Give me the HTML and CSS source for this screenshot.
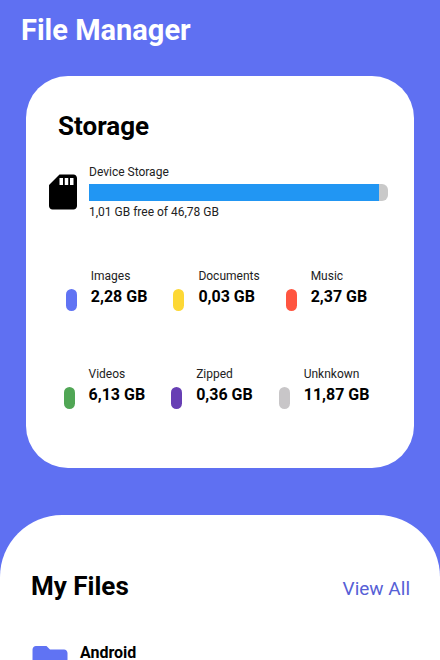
FILE: index.html
```
<!DOCTYPE html>
<html lang="en">
<head>
<meta charset="utf-8">
<meta name="viewport" content="width=device-width, initial-scale=1">
<title>File Manager</title>
<link rel="stylesheet" href="styles.css">
</head>
<body>
<div class="app">
  <header class="app-header"><h1>File Manager</h1></header>
  <main>
    <section class="storage">
      <h2>Storage</h2>
      <div class="device">
        <svg class="icon" viewBox="0 0 24 24" aria-hidden="true"><path d="M18 2h-8L4.020 8 4 20c0 1.100.9 2 2 2h12c1.100 0 2-.9 2-2V4c0-1.100-.9-2-2-2zm-6 6h-2V4h2v4zm3 0h-2V4h2v4zm3 0h-2V4h2v4z"/></svg>
        <div class="device-info">
          <p class="label">Device Storage</p>
          <div class="bar"><div class="bar-used" style="width: 97%"></div></div>
          <p class="label">1,01 GB free of 46,78 GB</p>
        </div>
      </div>
      <div class="legend">
        <ul class="legend-row">
          <li><span class="pill images"></span><div><p class="label">Images</p><p class="value">2,28 GB</p></div></li>
          <li><span class="pill documents"></span><div><p class="label">Documents</p><p class="value">0,03 GB</p></div></li>
          <li><span class="pill music"></span><div><p class="label">Music</p><p class="value">2,37 GB</p></div></li>
        </ul>
        <ul class="legend-row">
          <li><span class="pill videos"></span><div><p class="label">Videos</p><p class="value">6,13 GB</p></div></li>
          <li><span class="pill zipped"></span><div><p class="label">Zipped</p><p class="value">0,36 GB</p></div></li>
          <li><span class="pill unknown"></span><div><p class="label">Unknkown</p><p class="value">11,87 GB</p></div></li>
        </ul>
      </div>
    </section>
    <section class="files">
      <div class="files-head">
        <h2>My Files</h2>
        <a href="#">View All</a>
      </div>
      <div class="file">
        <svg class="icon folder" viewBox="0 0 24 24" aria-hidden="true"><path d="M10 4H4c-1.100 0-1.990.9-1.990 2L2 18c0 1.100.9 2 2 2h16c1.100 0 2-.9 2-2V8c0-1.100-.9-2-2-2h-8l-2-2z"/></svg>
        <p class="file-name">Android</p>
      </div>
    </section>
  </main>
</div>
</body>
</html>
```
FILE: styles.css
```
* {
  box-sizing: border-box;
  margin: 0;
  padding: 0;
}

body {
  background: #5f70f2;
  color: #000;
  font-family: Roboto, "Liberation Sans", sans-serif;
}

.app {
  display: flex;
  flex-direction: column;
  height: 100vh;
  overflow: hidden;
}

.app-header {
  padding: 12px 21px 28px;
  color: #fff;
}

h1 {
  font-size: 29px;
  line-height: 36px;
  font-weight: 700;
}

h2 {
  font-size: 26px;
  line-height: 32px;
  font-weight: 700;
}

.storage {
  margin: 0 26px;
  padding: 34px 26px 58px 16px;
  border-radius: 42px;
  background: #fff;
}

.storage h2 {
  padding-left: 16px;
}

.device {
  display: flex;
  align-items: center;
  gap: 5px;
  margin-top: 22px;
}

.icon {
  flex: none;
  width: 42px;
  height: 42px;
}

.device-info {
  flex: 1;
}

.label {
  font-size: 12px;
  line-height: 16px;
  color: #222;
}

.bar {
  height: 17px;
  margin: 4px 0 3px;
  border-radius: 0 6px 6px 0;
  background: #c9c9c9;
  overflow: hidden;
}

.bar-used {
  height: 100%;
  background: #2196f3;
}

.legend {
  display: flex;
  flex-direction: column;
  gap: 54px;
  margin-top: 48px;
  padding-left: 3px;
}

.legend-row {
  display: flex;
  justify-content: center;
  gap: 26px;
  list-style: none;
}

.legend-row li {
  display: flex;
  align-items: flex-end;
  gap: 14px;
}

.pill {
  width: 11px;
  height: 22px;
  margin-bottom: 1px;
  border-radius: 6px;
}

.images { background: #6073f3; }
.documents { background: #fdd835; }
.music { background: #ff5540; }
.videos { background: #50a655; }
.zipped { background: #673fb4; }
.unknown { background: #c8c6c8; }

.value {
  padding: 3px 0 5px;
  font-size: 16px;
  line-height: 20px;
  font-weight: 700;
}

.files {
  margin-top: 47px;
  padding: 55px 30px 40px 29px;
  border-radius: 62px 62px 0 0;
  background: #fff;
}

.files-head {
  display: flex;
  align-items: center;
  justify-content: space-between;
  padding-left: 2px;
}

.files-head a {
  padding-top: 6px;
  font-size: 19px;
  line-height: 24px;
  color: #5660d6;
  text-decoration: none;
}

.file {
  display: flex;
  gap: 9px;
  margin-top: 37px;
}

.folder {
  fill: #6073f3;
}

.file-name {
  padding-top: 4px;
  font-size: 16px;
  line-height: 20px;
  font-weight: 700;
}
```
